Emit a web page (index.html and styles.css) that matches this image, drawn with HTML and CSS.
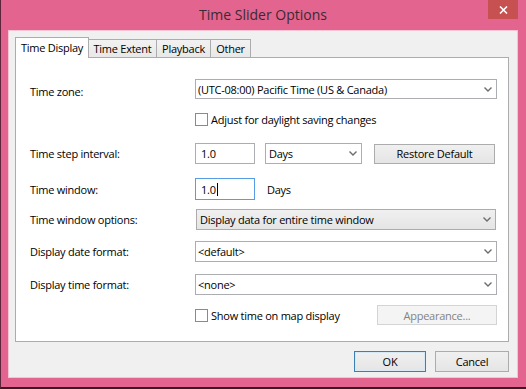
FILE: index.html
```html
<!DOCTYPE html>
<html>
<head>
<meta charset="utf-8">
<link rel="stylesheet" href="styles.css">
</head>
<body>
<div class="window">
  <div class="titlebar">
    <div class="title-spacer"></div>
    <div class="title">Time Slider Options</div>
    <div class="close">
      <svg width="9" height="8" viewBox="0 0 9 8"><path d="M1 0.5 L8 7.5 M8 0.5 L1 7.5" stroke="#fff" stroke-width="1.6" fill="none"/></svg>
    </div>
  </div>
  <div class="client">
    <div class="tabs">
      <div class="tab active w1">Time Display</div>
      <div class="tab w2">Time Extent</div>
      <div class="tab w3">Playback</div>
      <div class="tab w4">Other</div>
    </div>
    <div class="panel">
      <div class="row r1">
        <div class="label low">Time zone:</div>
        <div class="combo wide"><span class="ctext">(UTC-08:00) Pacific Time (US &amp; Canada)</span><svg class="arrow" width="8" height="5" viewBox="0 0 8 5"><path d="M0.5 0.5 L4 4 L7.5 0.5" stroke="#6d6d6d" stroke-width="1.4" fill="none"/></svg></div>
      </div>
      <div class="row r2">
        <div class="label"></div>
        <div class="check"></div><span class="checktext">Adjust for daylight saving changes</span>
      </div>
      <div class="row r3">
        <div class="label">Time step interval:</div>
        <div class="textbox">1.0</div>
        <div class="combo days"><span class="ctext">Days</span><svg class="arrow" width="8" height="5" viewBox="0 0 8 5"><path d="M0.5 0.5 L4 4 L7.5 0.5" stroke="#6d6d6d" stroke-width="1.4" fill="none"/></svg></div>
        <div class="button restore">Restore Default</div>
      </div>
      <div class="row r4">
        <div class="label">Time window:</div>
        <div class="textbox focused">1.0<span class="caret"></span></div>
        <span class="unit">Days</span>
      </div>
      <div class="row r5">
        <div class="label">Time window options:</div>
        <div class="combo wide dropdown"><span class="ctext">Display data for entire time window</span><svg class="arrow" width="8" height="5" viewBox="0 0 8 5"><path d="M0.5 0.5 L4 4 L7.5 0.5" stroke="#6d6d6d" stroke-width="1.4" fill="none"/></svg></div>
      </div>
      <div class="row r6">
        <div class="label">Display date format:</div>
        <div class="combo wide"><span class="ctext">&lt;default&gt;</span><svg class="arrow" width="8" height="5" viewBox="0 0 8 5"><path d="M0.5 0.5 L4 4 L7.5 0.5" stroke="#6d6d6d" stroke-width="1.4" fill="none"/></svg></div>
      </div>
      <div class="row r7">
        <div class="label">Display time format:</div>
        <div class="combo wide"><span class="ctext">&lt;none&gt;</span><svg class="arrow" width="8" height="5" viewBox="0 0 8 5"><path d="M0.5 0.5 L4 4 L7.5 0.5" stroke="#6d6d6d" stroke-width="1.4" fill="none"/></svg></div>
      </div>
      <div class="row r8">
        <div class="label"></div>
        <div class="check"></div><span class="checktext">Show time on map display</span>
        <div class="button disabled appearance">Appearance...</div>
      </div>
    </div>
    <div class="footer">
      <div class="button default ok">OK</div>
      <div class="button cancel">Cancel</div>
    </div>
  </div>
</div>
</body>
</html>
```

FILE: styles.css
```css
* { box-sizing: border-box; }
html, body { margin: 0; padding: 0; }
body {
  width: 526px;
  height: 389px;
  overflow: hidden;
  font-family: "Open Sans", "Noto Sans", sans-serif;
  font-size: 11px;
  letter-spacing: -0.25px;
  color: #000;
}
.window {
  width: 526px;
  height: 389px;
  background: #e3648e;
  border-left: 1px solid #5c2539;
  border-bottom: 2px solid #3a1a25;
  display: flex;
  flex-direction: column;
}
.titlebar {
  height: 30px;
  display: flex;
  align-items: flex-start;
  flex: none;
}
.title-spacer { width: 37px; }
.title {
  flex: 1;
  text-align: center;
  font-size: 14px;
  letter-spacing: 0;
  line-height: 30px;
  color: #3b2a33;
}
.close {
  width: 30px;
  height: 19px;
  margin-right: 8px;
  background: #c75050;
  display: flex;
  align-items: center;
  justify-content: center;
}
.client {
  margin-left: 7px;
  width: 510px;
  height: 348px;
  background: #f0f0f0;
  border: 1px solid #f3c4d4;
  padding: 6px 0 0 6px;
  flex: none;
}
.tabs {
  display: flex;
  align-items: flex-end;
  height: 20px;
}
.tab {
  height: 18px;
  border: 1px solid #acacac;
  border-bottom: none;
  background: linear-gradient(#f2f2f2, #e8e8e8);
  margin-left: -1px;
  display: flex;
  align-items: center;
  justify-content: center;
  padding-bottom: 1px;
}
.tab.active {
  height: 21px;
  margin-bottom: -1px;
  margin-left: 0;
  background: #fff;
  position: relative;
  z-index: 1;
  padding-bottom: 2px;
}
.w1 { width: 74px; }
.w2 { width: 69px; }
.w3 { width: 55px; }
.w4 { width: 41px; }
.panel {
  width: 494px;
  height: 285px;
  border: 1px solid #acacac;
  background: #fff;
  padding: 0 10px 0 14px;
}
.row {
  display: flex;
  align-items: center;
}
.label { width: 165px; flex: none; }
.label.low { padding-top: 4px; }
.r1 { margin-top: 21px; height: 20px; }
.r2 { margin-top: 14px; height: 13px; }
.r3 { margin-top: 17px; height: 21px; }
.r4 { margin-top: 14px; height: 22px; }
.r5 { margin-top: 9px; height: 21px; }
.r6 { margin-top: 11px; height: 21px; }
.r7 { margin-top: 12px; height: 21px; }
.r8 { margin-top: 10px; height: 20px; }
.combo {
  height: 100%;
  border: 1px solid #abadb3;
  background: #fff;
  display: flex;
  align-items: center;
  padding: 0 4px 0 2px;
}
.combo .ctext { flex: 1; white-space: nowrap; }
.combo .arrow { flex: none; }
.combo.wide { width: 302px; }
.combo.dropdown {
  width: 300px;
  margin-left: 1px;
  background: linear-gradient(#f0f0f0, #e5e5e5);
  border-color: #acacac;
  padding-left: 3px;
}
.combo.days {
  width: 97px;
  margin-left: 10px;
  padding-left: 3px;
}
.textbox {
  width: 60px;
  height: 100%;
  border: 1px solid #abadb3;
  background: #fff;
  padding-left: 5px;
  display: flex;
  align-items: center;
}
.textbox.focused { border-color: #569de5; }
.caret {
  display: inline-block;
  width: 1px;
  height: 13px;
  background: #000;
  margin-left: 1px;
}
.unit { margin-left: 12px; }
.check {
  width: 13px;
  height: 13px;
  border: 1px solid #8a8a8a;
  background: #fff;
  flex: none;
}
.checktext { margin-left: 3px; }
.button {
  height: 21px;
  border: 1px solid #acacac;
  background: linear-gradient(#f0f0f0, #e5e5e5);
  display: flex;
  align-items: center;
  justify-content: center;
}
.restore { width: 121px; margin-left: 12px; height: 20px; }
.appearance { width: 120px; height: 20px; margin-left: auto; margin-right: 1px; }
.button.disabled {
  background: #f4f4f4;
  border-color: #d4d4d4;
  color: #838383;
}
.footer {
  display: flex;
  justify-content: flex-end;
  margin-top: 9px;
  padding-right: 8px;
  gap: 9px;
}
.ok { width: 72px; }
.cancel { width: 74px; }
.button.default { border-color: #3c7fb1; box-shadow: inset 0 0 0 1px #d8e9f6; }
```
